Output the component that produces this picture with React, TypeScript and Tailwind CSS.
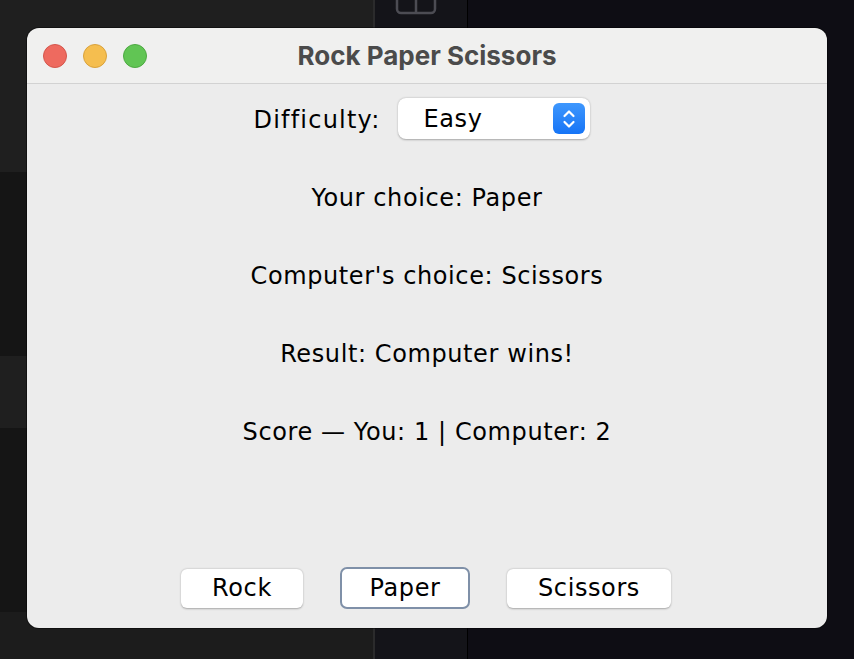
import React from "react";

const body = { fontFamily: '"DejaVu Sans", "Liberation Sans", sans-serif' };
const title = { fontFamily: 'Inter, "Noto Sans", sans-serif' };

function Light({ fill, border }: { fill: string; border: string }) {
  return <div className={`w-[24px] h-[24px] rounded-full border ${fill} ${border}`} />;
}

export default function App() {
  return (
    <div className="relative w-[854px] h-[659px] overflow-hidden flex bg-[#0e0d14]">
      <div className="w-[373px] flex flex-col">
        <div className="h-[172px] bg-[#1f1f1f]" />
        <div className="h-[184px] bg-[#151515]" />
        <div className="h-[72px] bg-[#1f1f1f]" />
        <div className="h-[184px] bg-[#151515]" />
        <div className="flex-1 bg-[#1c1c1c]" />
      </div>
      <div className="w-[2px] bg-[#2b2b2c]" />
      <div className="w-[92px] bg-[#141419] relative">
        <svg className="absolute left-[20px] top-0" width="44" height="18" viewBox="0 0 44 18">
          <rect x="2" y="-10" width="38" height="23" rx="4" fill="none" stroke="#4c4c53" strokeWidth="2.5" />
          <line x1="21" y1="0" x2="21" y2="13" stroke="#4c4c53" strokeWidth="2.5" />
        </svg>
      </div>
      <div className="w-[1px] bg-black" />
      <div className="flex-1 bg-[#0e0d14]" />

      <div className="absolute left-[27px] top-[28px] w-[800px] h-[600px] rounded-[12px] overflow-hidden flex flex-col shadow-[0_0_0_1px_rgba(0,0,0,0.4)]">
        <div className="relative h-[56px] bg-[#f0f0ef] border-b border-[#d2d2d2] flex items-center px-[16px] gap-[16px]">
          <Light fill="bg-[#ee6a5f]" border="border-[#d4564c]" />
          <Light fill="bg-[#f5be4f]" border="border-[#d9a23c]" />
          <Light fill="bg-[#61c554]" border="border-[#4da942]" />
          <div
            className="absolute inset-0 flex items-center justify-center text-[26px] font-bold text-[#4b4b4b]"
            style={title}
          >
            Rock Paper Scissors
          </div>
        </div>
        <div className="flex-1 bg-[#ececec] flex flex-col items-center text-black tracking-[0.6px] text-[24px]" style={body}>
          <div className="mt-[14px] flex items-center gap-[18px] h-[41px] pr-[10px]">
            <span className="tracking-[1.2px] pt-[3px]">Difficulty:</span>
            <div className="relative w-[192px] h-[41px] bg-white rounded-[8px] shadow-[0_0.5px_2px_rgba(0,0,0,0.3)] flex items-center pl-[25px]">
              <span>Easy</span>
              <div className="absolute right-[5px] top-[5px] w-[32px] h-[31px] rounded-[6px] bg-gradient-to-b from-[#3e97fd] to-[#1574f6] flex items-center justify-center">
                <svg width="14" height="22" viewBox="0 0 14 22" fill="none" stroke="white" strokeWidth="2.2" strokeLinecap="round" strokeLinejoin="round">
                  <polyline points="2.5,8 7,3.5 11.5,8" />
                  <polyline points="2.5,14 7,18.5 11.5,14" />
                </svg>
              </div>
            </div>
          </div>
          <div className="mt-[44px] flex flex-col items-center gap-[48px]">
            <div className="h-[30px] leading-[30px]">Your choice: Paper</div>
            <div className="h-[30px] leading-[30px]">Computer's choice: Scissors</div>
            <div className="h-[30px] leading-[30px]">Result: Computer wins!</div>
            <div className="h-[30px] leading-[30px]">Score — You: 1 | Computer: 2</div>
          </div>
          <div className="mt-auto mb-[19px] flex items-center gap-[37px] h-[42px] pr-[2px]">
            <button className="w-[122px] h-[39px] bg-white rounded-[6px] shadow-[0_0.5px_2px_rgba(0,0,0,0.3)] flex items-center justify-center">
              Rock
            </button>
            <button className="w-[130px] h-[42px] bg-white rounded-[7px] border-2 border-[#7f90a8] flex items-center justify-center">
              Paper
            </button>
            <button className="w-[164px] h-[39px] bg-white rounded-[6px] shadow-[0_0.5px_2px_rgba(0,0,0,0.3)] flex items-center justify-center">
              Scissors
            </button>
          </div>
        </div>
      </div>
    </div>
  );
}
